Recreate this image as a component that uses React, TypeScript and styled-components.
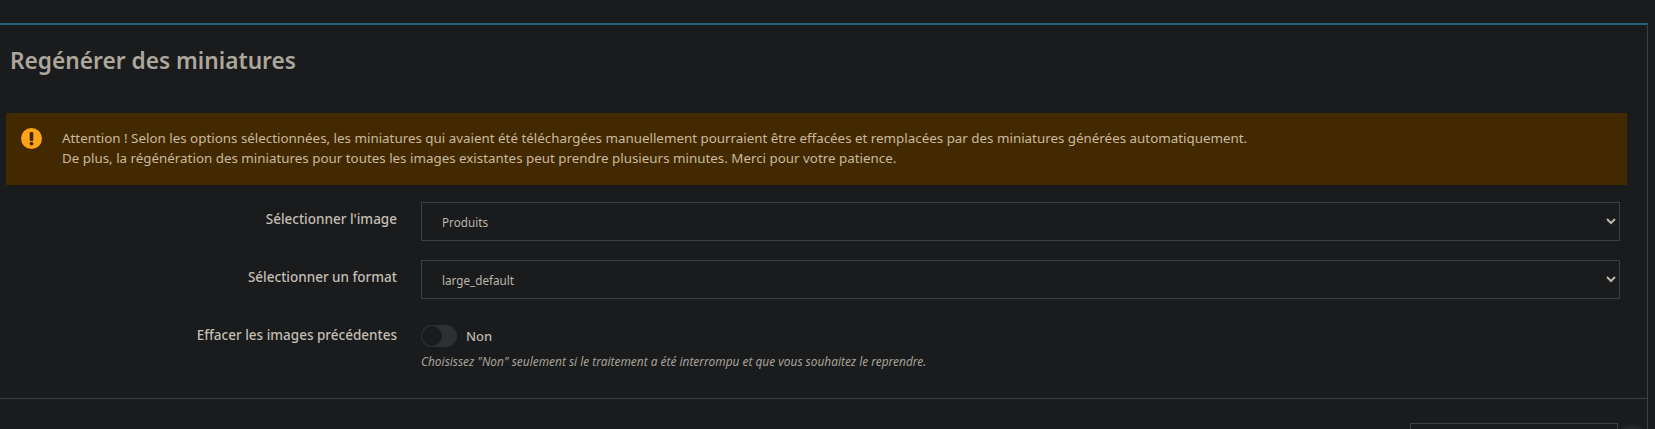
import React from 'react';
import styled, { createGlobalStyle } from 'styled-components';

const GlobalStyle = createGlobalStyle`
  html, body {
    margin: 0;
    padding: 0;
    height: 100%;
    overflow: hidden;
    background-color: #191b1d;
  }
`;

const App: React.FC = () => {
  return (
    <>
      <GlobalStyle />
      <Page>
        <Panel>
          <Title>Regénérer des miniatures</Title>
          <Alert>
            <AlertIcon viewBox="0 0 21 21">
              <circle cx="10.5" cy="10.5" r="10.5" fill="#ffa31a" />
              <rect x="8.7" y="4" width="3.6" height="9" rx="1.2" fill="#432900" />
              <circle cx="10.5" cy="15.6" r="1.9" fill="#432900" />
            </AlertIcon>
            <AlertText>
              Attention ! Selon les options sélectionnées, les miniatures qui avaient été téléchargées manuellement pourraient être effacées et remplacées par des miniatures générées automatiquement.
              <br />
              De plus, la régénération des miniatures pour toutes les images existantes peut prendre plusieurs minutes. Merci pour votre patience.
            </AlertText>
          </Alert>
          <Form>
            <Row>
              <Label>Sélectionner l'image</Label>
              <Field>
                <Select defaultValue="products">
                  <option value="products">Produits</option>
                </Select>
              </Field>
            </Row>
            <Row>
              <Label>Sélectionner un format</Label>
              <Field>
                <Select defaultValue="large">
                  <option value="large">large_default</option>
                </Select>
              </Field>
            </Row>
            <Row>
              <Label>Effacer les images précédentes</Label>
              <Field>
                <SwitchLine>
                  <Switch>
                    <Knob />
                  </Switch>
                  <SwitchLabel>Non</SwitchLabel>
                </SwitchLine>
                <Help>Choisissez "Non" seulement si le traitement a été interrompu et que vous souhaitez le reprendre.</Help>
              </Field>
            </Row>
          </Form>
          <Footer>
            <FooterButton />
          </Footer>
        </Panel>
        <ScrollGlow />
      </Page>
    </>
  );
};

const Page = styled.div`
  position: relative;
  height: 429px;
  padding: 23px 7px 0 0;
  box-sizing: border-box;
  overflow: hidden;
  font-family: 'Noto Sans', sans-serif;
  color: #bdb7ab;
`;

const Panel = styled.div`
  border-top: 2px solid #1f6478;
  border-right: 1px solid #3d3f42;
  height: 420px;
`;

const Title = styled.h1`
  margin: 0;
  padding: 21px 0 0 10px;
  height: 88px;
  box-sizing: border-box;
  font-size: 22.7px;
  line-height: 30px;
  font-weight: 600;
  color: #aca69b;
`;

const Alert = styled.div`
  display: flex;
  margin: 0 20px 0 6px;
  height: 72px;
  box-sizing: border-box;
  padding: 15px 0 0 15px;
  background-color: #432900;
`;

const AlertIcon = styled.svg`
  width: 21px;
  height: 21px;
  margin-right: 20px;
  flex: none;
`;

const AlertText = styled.div`
  font-size: 13.37px;
  line-height: 20px;
  color: #c9b99f;
`;

const Form = styled.div`
  display: flex;
  flex-direction: column;
  gap: 19px;
  padding-top: 17px;
`;

const Row = styled.div`
  display: flex;
  gap: 24px;
`;

const Label = styled.label`
  width: 397px;
  flex: none;
  text-align: right;
  padding-top: 7px;
  font-size: 13.5px;
  line-height: 20px;
  font-weight: 500;
  color: #c4beb3;
`;

const Field = styled.div`
  width: 1199px;
`;

const Select = styled.select`
  display: block;
  width: 100%;
  height: 39px;
  padding: 0 16px;
  border: 1px solid #3d3f42;
  border-radius: 0;
  background-color: #191b1d;
  color: #bdb7ab;
  font-family: 'Noto Sans', sans-serif;
  font-size: 11.7px;
  outline: none;
`;

const SwitchLine = styled.div`
  display: flex;
  align-items: center;
  gap: 9px;
  padding-top: 7px;
`;

const Switch = styled.div`
  position: relative;
  width: 36px;
  height: 22px;
  border-radius: 11px;
  background-color: #2e3134;
`;

const Knob = styled.span`
  position: absolute;
  top: 1px;
  left: 1px;
  width: 20px;
  height: 20px;
  border-radius: 50%;
  background-color: #191b1d;
`;

const SwitchLabel = styled.span`
  font-size: 13px;
  line-height: 20px;
  font-weight: 500;
  color: #bdb7ab;
`;

const Help = styled.div`
  margin-top: 6px;
  font-size: 11.9px;
  line-height: 16px;
  font-style: italic;
  color: #a8a297;
`;

const Footer = styled.div`
  display: flex;
  justify-content: flex-end;
  margin-top: 29px;
  padding: 24px 29px 0 0;
  border-top: 1px solid #3d3f42;
`;

const FooterButton = styled.div`
  width: 208px;
  height: 30px;
  box-sizing: border-box;
  border: 1px solid #3d3f42;
`;

const ScrollGlow = styled.div`
  position: absolute;
  right: 11px;
  bottom: -10px;
  width: 24px;
  height: 14px;
  border-radius: 50%;
  background-color: #26292b;
  filter: blur(2px);
`;

export default App;
